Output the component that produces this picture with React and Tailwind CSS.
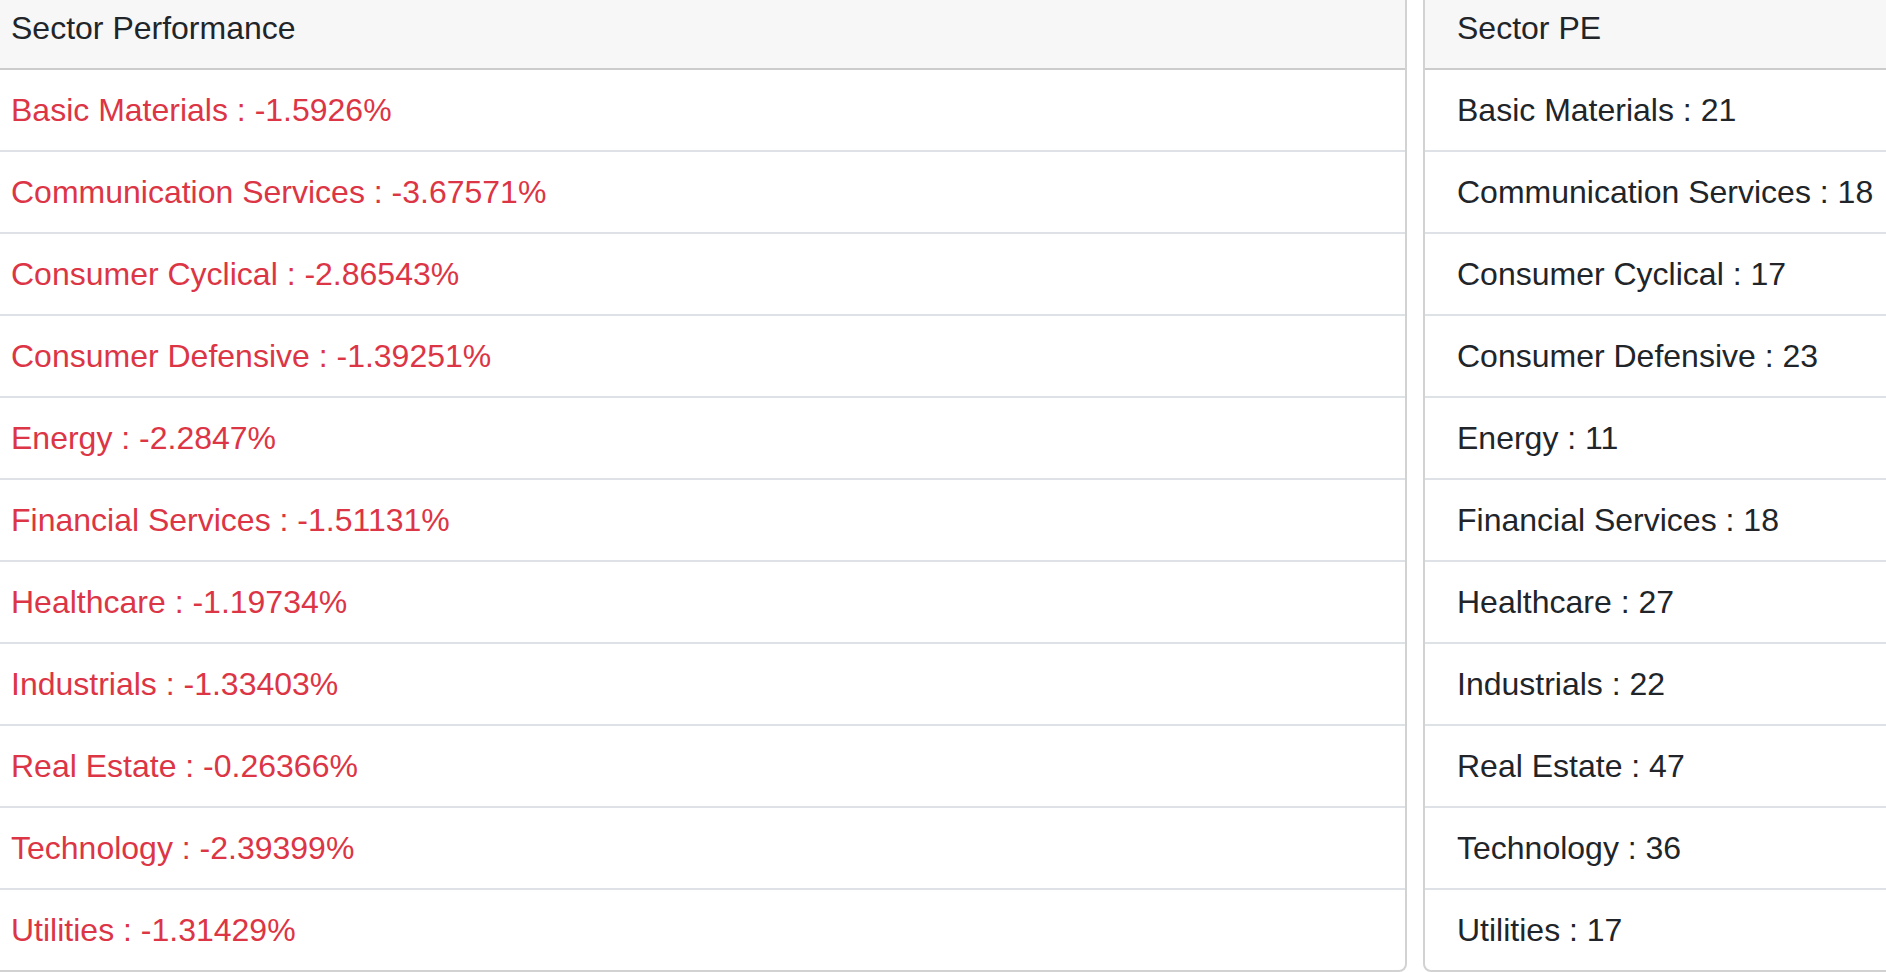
import React from "react";

const performance = [
  { name: "Basic Materials", value: "-1.5926" },
  { name: "Communication Services", value: "-3.67571" },
  { name: "Consumer Cyclical", value: "-2.86543" },
  { name: "Consumer Defensive", value: "-1.39251" },
  { name: "Energy", value: "-2.2847" },
  { name: "Financial Services", value: "-1.51131" },
  { name: "Healthcare", value: "-1.19734" },
  { name: "Industrials", value: "-1.33403" },
  { name: "Real Estate", value: "-0.26366" },
  { name: "Technology", value: "-2.39399" },
  { name: "Utilities", value: "-1.31429" },
];

const pe = [
  { name: "Basic Materials", value: 21 },
  { name: "Communication Services", value: 18 },
  { name: "Consumer Cyclical", value: 17 },
  { name: "Consumer Defensive", value: 23 },
  { name: "Energy", value: 11 },
  { name: "Financial Services", value: 18 },
  { name: "Healthcare", value: 27 },
  { name: "Industrials", value: 22 },
  { name: "Real Estate", value: 47 },
  { name: "Technology", value: 36 },
  { name: "Utilities", value: 17 },
];

const Card = ({ title, className, children }) => (
  <div
    className={`flex flex-col border-2 border-[#d2d2d2] rounded-[8px] bg-white overflow-hidden ${className}`}
  >
    <div className="bg-[#f7f7f7] border-b-2 border-[#cccccc] px-8 py-4 leading-[48px] text-[#212529]">
      {title}
    </div>
    <ul className="flex flex-col">{children}</ul>
  </div>
);

export default function App() {
  return (
    <div
      className="w-[1886px] h-[972px] overflow-hidden bg-white text-[32px]"
      style={{ fontFamily: "'Liberation Sans', Arial, sans-serif" }}
    >
      <div className="flex gap-4 -ml-[23px] -mt-[14px]">
        <Card title="Sector Performance" className="w-[1430px] shrink-0">
          {performance.map((s, i) => (
            <li
              key={s.name}
              className={`px-8 py-4 leading-[48px] text-[#dc3545] ${
                i < performance.length - 1 ? "border-b-2 border-[#dee2e6]" : ""
              }`}
            >
              {s.name} : {s.value}%
            </li>
          ))}
        </Card>
        <Card title="Sector PE" className="w-[700px] shrink-0">
          {pe.map((s, i) => (
            <li
              key={s.name}
              className={`px-8 py-4 leading-[48px] text-[#212529] ${
                i < pe.length - 1 ? "border-b-2 border-[#dee2e6]" : ""
              }`}
            >
              {s.name} : {s.value}
            </li>
          ))}
        </Card>
      </div>
    </div>
  );
}
